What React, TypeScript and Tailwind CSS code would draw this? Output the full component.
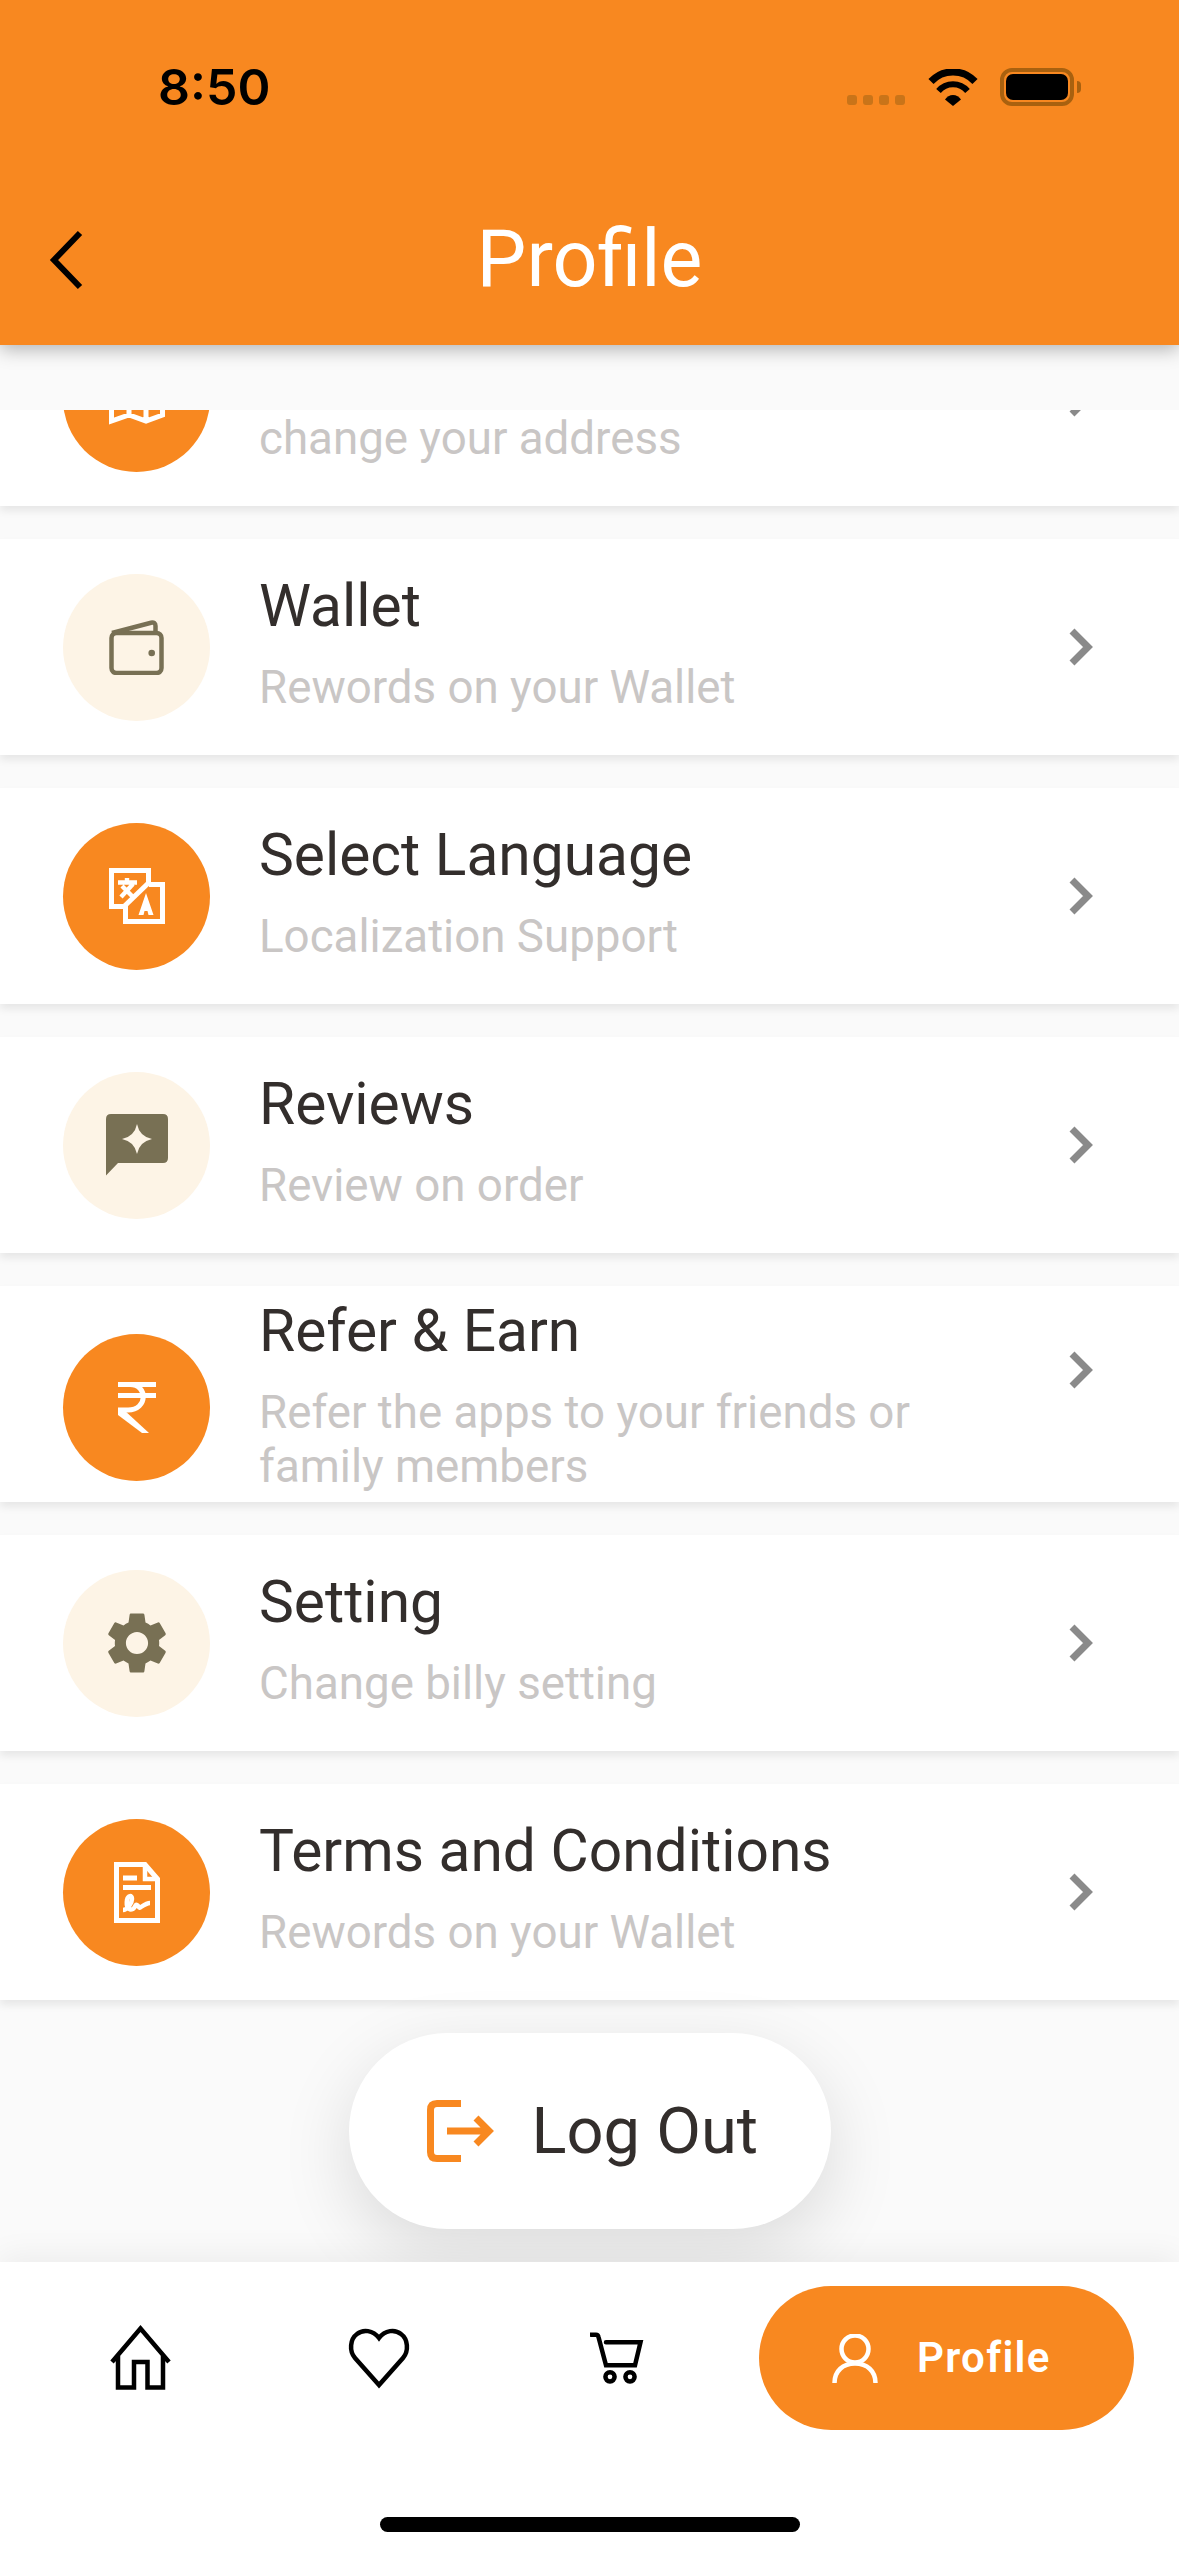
import type { ReactNode } from "react";
import { MdSettings } from "react-icons/md";

const ORANGE = "#f88820";

function MapIcon() {
  return (
    <svg width="56" height="56" viewBox="0 0 56 56" fill="none" stroke="#fff" strokeWidth="5">
      <path d="M2.5 8 L20 2.5 L37 8 L53.5 2.5 V45 L37 51 L20 45 L2.5 51 Z M20 2.5 V45 M37 8 V51" />
    </svg>
  );
}

function WalletIcon() {
  return (
    <svg width="55" height="55" viewBox="0 0 55 55" fill="none" stroke="#787054" strokeWidth="4.5">
      <rect x="2.5" y="13" width="50" height="40" rx="5" />
      <path d="M3 13 L42 2.7 Q46.5 2 46.5 6 V12" />
      <circle cx="42.7" cy="33" r="3.3" fill="#787054" stroke="none" />
    </svg>
  );
}

function TranslateIcon() {
  return (
    <svg width="56" height="56" viewBox="0 0 56 56" fill="none" stroke="#fff" strokeWidth="5">
      <path d="M15 38.5 H2.5 V2.5 H39.5 V15" />
      <path d="M40 16.5 H53.5 V53.5 H16.5 V37" />
      <path d="M14 39.5 L41 13.5" />
      <path d="M9 14.5 H28 M18 10 V14 M24 16 L12 29 M13 18 L24 29" strokeWidth="4.4" />
      <path d="M37 25 L44.5 47 H39.5 L38.5 43 H35.5 L34.5 47 H29.5 Z" fill="#fff" stroke="none" />
    </svg>
  );
}

function ReviewIcon() {
  return (
    <svg width="62" height="62" viewBox="0 0 62 62">
      <path d="M0 5 Q0 0 5 0 H57 Q62 0 62 5 V44 Q62 49 57 49 H12 L0 61.5 Z" fill="#787054" />
      <path d="M31 10 Q33.5 22.5 46 25 Q33.5 27.5 31 40 Q28.5 27.5 16 25 Q28.5 22.5 31 10 Z" fill="#fdf4e6" />
    </svg>
  );
}

function RupeeIcon() {
  return (
    <svg width="38" height="51" viewBox="0 0 38 51" fill="none" stroke="#fff" strokeWidth="5">
      <path d="M0 2.5 H38 M0 13.5 H38" />
      <path d="M10 2.5 H12 C30 2.5 30 28 10 28 H0" />
      <path d="M0 27 V33 L24 51 H31 L6 28 Z" fill="#fff" stroke="none" />
    </svg>
  );
}

function DocIcon() {
  return (
    <svg width="46" height="61" viewBox="0 0 46 61" fill="none" stroke="#fff" strokeWidth="5">
      <path d="M2.5 2.5 H31 L43.5 17 V58.5 H2.5 Z" />
      <path d="M31 2.5 V17 H43.5" strokeWidth="4.5" />
      <path d="M9 16 H23 M9 25.5 H37" />
      <path
        d="M9 48 C13 48 18 42 18 37 C18 33 14 33 13 38 C12 44 14 49 19 47 C22 45 21 42 23 43 C25 44 25 47 27 45 C30 43 33 41 36 41"
        strokeWidth="4.5"
      />
    </svg>
  );
}

function Chevron({ className = "" }: { className?: string }) {
  return (
    <svg className={`shrink-0 ${className}`} width="30" height="40" viewBox="0 0 30 40" fill="none" stroke="#8a8a8a" strokeWidth="7">
      <path d="M6 4 L22 20 L6 36" />
    </svg>
  );
}

function MenuRow({
  icon,
  active,
  title,
  subtitle,
  tall,
}: {
  icon: ReactNode;
  active?: boolean;
  title?: string;
  subtitle: string;
  tall?: boolean;
}) {
  return (
    <div className="flex h-[216px] shrink-0 items-center bg-white pl-[63px] pr-[83px] shadow-[0_5px_8px_rgba(0,0,0,0.08)]">
      <div
        className={`flex h-[147px] w-[147px] shrink-0 items-center justify-center rounded-full ${
          active ? "bg-[#f88820]" : "bg-[#fdf4e6]"
        } ${tall ? "mt-[27px]" : ""}`}
      >
        {icon}
      </div>
      <div className={`ml-[49px] min-w-0 flex-1 pr-[60px] ${tall ? "mt-[10px] mb-[8px]" : "mb-[8px]"}`}>
        <div className="min-h-[70px] text-[58.7px] leading-[70px] text-[#332e2c]">{title}</div>
        <div className="mt-[20px] text-[45.7px] leading-[54px] text-[#c9c6c5]">{subtitle}</div>
      </div>
      <Chevron className={tall ? "mb-[48px]" : ""} />
    </div>
  );
}

function StatusBar() {
  return (
    <div className="flex h-[174px] items-center justify-between pl-[158px] pr-[98px]">
      <span className="font-['Inter',sans-serif] text-[50px] font-semibold text-black">8:50</span>
      <div className="flex items-end">
        <div className="mb-[1px] flex gap-[6px]">
          <span className="h-[10px] w-[10px] rounded-[3px] bg-[#c97419]" />
          <span className="h-[10px] w-[10px] rounded-[3px] bg-[#c97419]" />
          <span className="h-[10px] w-[10px] rounded-[3px] bg-[#c97419]" />
          <span className="h-[10px] w-[10px] rounded-[3px] bg-[#c97419]" />
        </div>
        <svg className="ml-[23px]" width="50" height="37" viewBox="0 0 50 37" fill="none" stroke="#000">
          <path d="M3 12.5 A30 30 0 0 1 47 12.5" strokeWidth="7" />
          <path d="M10.5 22 A19 19 0 0 1 39.5 22" strokeWidth="6" />
          <path d="M17 30.5 A9.5 9.5 0 0 1 33 30.5 L25 37 Z" fill="#000" stroke="none" />
        </svg>
        <div className="ml-[22px] flex items-center">
          <div className="h-[38px] w-[74px] rounded-[12px] border-[4px] border-[#a9610f] p-[2px]">
            <div className="h-full w-full rounded-[7px] bg-black" />
          </div>
          <div className="ml-[3px] h-[12px] w-[4px] rounded-r-full bg-[#a9610f]" />
        </div>
      </div>
    </div>
  );
}

export default function App() {
  return (
    <div className="flex h-[2556px] w-[1179px] flex-col overflow-hidden bg-[#fafafa] font-['Roboto',sans-serif]">
      <header className="relative z-20 h-[345px] shrink-0 bg-[#f88820] shadow-[0_4px_18px_rgba(0,0,0,0.3)]">
        <StatusBar />
        <div className="grid h-[171px] grid-cols-[1fr_auto_1fr] items-center pl-[48px]">
          <svg width="36" height="60" viewBox="0 0 36 60" fill="none" stroke="#000" strokeWidth="6">
            <path d="M32 3 L6 30 L32 57" />
          </svg>
          <h1 className="-ml-[48px] text-[79px] leading-none font-normal text-white">Profile</h1>
          <span />
        </div>
      </header>

      <div className="flex min-h-0 flex-1 flex-col pt-[65px]">
        <div className="flex min-h-0 flex-1 flex-col gap-[33px] overflow-hidden">
          <div className="-mt-[120px] flex flex-col">
            <MenuRow active icon={<MapIcon />} subtitle="change your address" />
          </div>
          <MenuRow icon={<WalletIcon />} title="Wallet" subtitle="Rewords on your Wallet" />
          <MenuRow active icon={<TranslateIcon />} title="Select Language" subtitle="Localization Support" />
          <MenuRow icon={<ReviewIcon />} title="Reviews" subtitle="Review on order" />
          <MenuRow
            active
            tall
            icon={<RupeeIcon />}
            title="Refer & Earn"
            subtitle="Refer the apps to your friends or family members"
          />
          <MenuRow icon={<MdSettings size={74} color="#787054" />} title="Setting" subtitle="Change billy setting" />
          <MenuRow active icon={<DocIcon />} title="Terms and Conditions" subtitle="Rewords on your Wallet" />
          <button
            type="button"
            className="mx-auto flex h-[196px] w-[482px] shrink-0 items-center rounded-full bg-white pl-[78px] shadow-[0_22px_70px_rgba(0,0,0,0.13)]"
          >
            <svg width="68" height="62" viewBox="0 0 68 62" fill="none" stroke={ORANGE} strokeWidth="7">
              <path d="M34 3.5 H10 Q3.5 3.5 3.5 10 V52 Q3.5 58.5 10 58.5 H34" />
              <path d="M20 31 H62 M49 18 L62 31 L49 44" />
            </svg>
            <span className="ml-[37px] text-[65px] leading-none text-[#332e2c]">Log Out</span>
          </button>
        </div>
      </div>

      <nav className="relative z-10 h-[294px] shrink-0 bg-white pt-[24px] shadow-[0_-6px_30px_rgba(0,0,0,0.06)]">
        <div className="grid h-[144px] grid-cols-[238px_238px_238px_398px] items-center pl-[22px]">
          <div className="flex justify-center">
            <svg width="62" height="66" viewBox="0 0 62 66" fill="none" stroke="#000" strokeWidth="4.5">
              <path d="M2 37 L30.5 3.5 L59 37 M8 30 V62.5 H24 V37 H37.5 V62.5 H53 V30" />
            </svg>
          </div>
          <div className="flex justify-center">
            <svg width="62" height="62" viewBox="0 0 62 62" fill="none" stroke="#000" strokeWidth="4.5">
              <path d="M31 58 L7 31 C1 24 2 12 9 7 C15 2 25 3 31 11 C37 3 47 2 53 7 C60 12 61 24 55 31 Z" />
            </svg>
          </div>
          <div className="flex justify-center">
            <svg width="54" height="52" viewBox="0 0 54 52" fill="none" stroke="#000" strokeWidth="4.5">
              <path d="M1 2.7 H6 Q8 2.7 8.5 5 L16 33.3 H45 L50.5 10.3 H16" strokeLinecap="round" />
              <circle cx="20" cy="44.8" r="4.6" />
              <circle cx="40" cy="44.8" r="4.6" />
            </svg>
          </div>
          <div className="ml-[23px] flex h-[144px] items-center rounded-full bg-[#f88820] pl-[73px]">
            <svg width="46" height="49" viewBox="0 0 46 49" fill="none" stroke="#fff" strokeWidth="4.5">
              <circle cx="23" cy="15" r="13.5" />
              <path d="M2.5 49 C2.5 37 11 29.5 23 29.5 C35 29.5 43.5 37 43.5 49" />
            </svg>
            <span className="ml-[39px] text-[42px] leading-none font-semibold tracking-[1.3px] text-white">Profile</span>
          </div>
        </div>
        <div className="mx-auto mt-[87px] h-[15px] w-[420px] rounded-full bg-black" />
      </nav>
    </div>
  );
}
